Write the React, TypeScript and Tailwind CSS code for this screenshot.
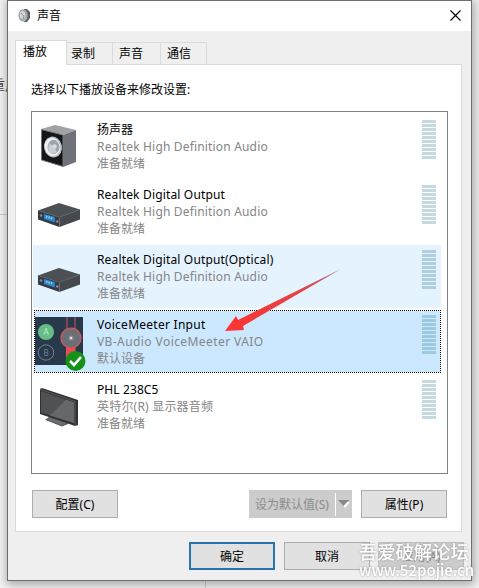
import React from "react";

const Meter = ({ color }: { color: string }) => (
  <div className="mt-[5px] flex w-[14px] flex-col gap-px">
    {Array.from({ length: 10 }, (_, i) => (
      <div key={i} className={`h-[3px] ${color}`} />
    ))}
  </div>
);

const SpeakerIcon = () => (
  <svg width="50" height="60" viewBox="0 0 50 60">
    <path d="M8 14L22 10L43 15L30 20Z" fill="#a1a2a6" />
    <path d="M30 20L43 15V47L30 52Z" fill="#707279" />
    <path d="M8.500 14.500L30 20V51.500L8.500 45Z" fill="#15161a" stroke="#77787c" />
    <ellipse cx="20" cy="32" rx="9" ry="10.500" fill="#b8bbc0" transform="rotate(-12 20 32)" />
    <ellipse cx="19.500" cy="32" rx="7.800" ry="9.200" fill="#f0f1f2" transform="rotate(-12 19.500 32)" />
    <ellipse cx="20.500" cy="32" rx="6" ry="7.200" fill="#9ca3ab" />
    <path d="M16 28L21 32L24 37Q19 41 15 36Z" fill="#c9ced3" />
    <circle cx="21.500" cy="31.500" r="2.300" fill="#d9dce1" />
  </svg>
);

const DigitalIcon = () => (
  <svg width="50" height="60" viewBox="0 0 50 60">
    <path d="M5 30.500L26 23L47 29.500L26.500 37.500Z" fill="#4b5055" />
    <path d="M5 30.500L26.500 37V47L5 39.500Z" fill="#343b44" />
    <path d="M26.500 37L47 29.500V39.500L26.500 47Z" fill="#45494d" />
    <path d="M5 30.500L26.500 37.200L47 29.500" fill="none" stroke="#6b7177" strokeWidth=".6" />
    <path d="M11 34L22 37V42.500L11 39Z" fill="#3185ca" />
    <path d="M13 36.500L20 38.700" stroke="#7dcbf7" strokeWidth="2" strokeDasharray="1.500 1" />
    <circle cx="8" cy="35.500" r="1.200" fill="#7d9099" />
    <circle cx="24.300" cy="41.500" r="1.200" fill="#8a9298" />
  </svg>
);

const MixerIcon = () => (
  <svg width="54" height="62" viewBox="0 0 54 62">
    <rect x="2" y="6" width="48" height="48" fill="#28394c" />
    <path d="M34 6V54M42 6V54" stroke="#d84e55" strokeWidth="1" />
    <path d="M33 33H42V48H33Z" fill="#ed4d4e" />
    <circle cx="13" cy="21" r="8" fill="#66bd87" />
    <circle cx="13" cy="41.500" r="7.700" fill="none" stroke="#73808c" strokeWidth="1" />
    <text x="13" y="24" textAnchor="middle" fontSize="8" fill="#c4e7cf" fontFamily="Noto Sans">A</text>
    <text x="13" y="44.500" textAnchor="middle" fontSize="8" fill="#73808c" fontFamily="Noto Sans">B</text>
    <circle cx="38" cy="27" r="10" fill="#6d6f77" stroke="#d8575d" strokeWidth="1.200" />
    <circle cx="38" cy="27" r="2.500" fill="#8c9096" />
    <circle cx="38" cy="27" r="1" fill="white" />
    <circle cx="42.500" cy="50" r="10" fill="#159018" />
    <path d="M37 50L41 54L48 46" fill="none" stroke="white" strokeWidth="2.600" />
  </svg>
);

const ScreenIcon = () => (
  <svg width="50" height="60" viewBox="0 0 50 60">
    <path d="M17 41L12.500 44.500L29 51L35 48.500L28 44Z" fill="#6b6e71" />
    <path d="M12.500 44.500L29 51L35 48.500" fill="none" stroke="#3b3d40" strokeWidth=".8" />
    <path d="M7 14L9 13L45 25V50L42 51L7 39Z" fill="#303134" />
    <path d="M8 16L41 27.500V48L8 37.500Z" fill="#505152" />
    <path d="M33 24.700L41 27.500V48L17 40.500Z" fill="#666767" />
    <path d="M7 14.300L42 26.500V51" fill="none" stroke="#8a8b8d" strokeWidth=".5" />
  </svg>
);

type Device = {
  name: string;
  detail: string;
  status: string;
  icon: React.ReactNode;
  row: string;
  meter: string;
  nameSpacing: string;
  detailSpacing: string;
};

const devices: Device[] = [
  { name: "扬声器", detail: "Realtek High Definition Audio", status: "准备就绪", icon: <SpeakerIcon />, row: "h-[64px] mb-px", meter: "bg-[#c5dadf]", nameSpacing: "", detailSpacing: "tracking-[0.17px]" },
  { name: "Realtek Digital Output", detail: "Realtek High Definition Audio", status: "准备就绪", icon: <DigitalIcon />, row: "h-[64px] mb-px", meter: "bg-[#c5dadf]", nameSpacing: "tracking-[0.16px]", detailSpacing: "tracking-[0.17px]" },
  { name: "Realtek Digital Output(Optical)", detail: "Realtek High Definition Audio", status: "准备就绪", icon: <DigitalIcon />, row: "h-[63px] mb-[3px] bg-[#e5f3ff]", meter: "bg-[#afcfdf]", nameSpacing: "tracking-[0.16px]", detailSpacing: "tracking-[0.17px]" },
  { name: "VoiceMeeter Input", detail: "VB-Audio VoiceMeeter VAIO", status: "默认设备", icon: <MixerIcon />, row: "h-[61px] mb-[3px] bg-[#cce8ff] outline-1 -outline-offset-0 outline-dotted outline-black", meter: "bg-[#9dc9df]", nameSpacing: "tracking-[0.26px]", detailSpacing: "tracking-[0.42px]" },
  { name: "PHL 238C5", detail: "英特尔(R) 显示器音频", status: "准备就绪", icon: <ScreenIcon />, row: "h-[64px]", meter: "bg-[#c5dadf]", nameSpacing: "tracking-[0.1px]", detailSpacing: "tracking-[0.2px]" },
];

const Button = ({ children, className }: { children: React.ReactNode; className: string }) => (
  <button className={`flex h-[28px] shrink-0 items-center justify-center ${className}`}>{children}</button>
);

export default function App() {
  return (
    <main className="relative h-[588px] w-[479px] overflow-hidden bg-[#f4f4f4] pl-[7px] font-['Noto_Sans','Noto_Sans_CJK_SC',sans-serif] text-[12px] leading-[17px] text-black">
      <span className="absolute top-[76px] -left-[9px] text-[14px] text-[#444]">重启</span>
      <div className="absolute top-[214px] left-0 h-px w-[7px] bg-[#ccc]" />
      <div className="absolute top-[581px] left-[205px] h-[7px] w-px bg-[#ccc]" />
      <section className="relative flex h-[581px] w-[465px] flex-col border border-[#6e6e6e] bg-[#efefef] shadow-[1px_2px_9px_2px_rgba(0,0,0,0.3)]">
        <header className="flex h-[30px] shrink-0 items-center justify-between bg-white pr-[10px] pb-[2px] pl-[9px]">
          <div className="flex items-center gap-[5px]">
            <svg width="15" height="15" viewBox="0 0 15 15">
              <path d="M7 1L10 1L13 4V10L10 14H7Z" fill="#58626a" />
              <ellipse cx="6" cy="7.500" rx="4.600" ry="6.200" fill="#abb4b9" />
              <ellipse cx="5.500" cy="7" rx="3.200" ry="4.500" fill="#d2d8da" stroke="#8c969c" strokeWidth=".7" />
              <path d="M4 5L7 8L6 11" fill="none" stroke="#8c969c" />
            </svg>
            <span>声音</span>
          </div>
          <svg width="11" height="11" viewBox="0 0 11 11"><path d="M.5.5L10.500 10.500M10.500.5L.5 10.500" stroke="black" strokeWidth="1.200" /></svg>
        </header>
        <nav className="z-10 flex h-[33px] shrink-0 items-end pl-[7px]">
          <div className="-mb-px h-[25px] w-[52px] border border-b-0 border-[#dadada] bg-white pt-[2px] pl-[7px]">播放</div>
          <div className="h-[22px] w-[46px] border-t border-r border-[#dadada] pt-[2px] pl-[4px]">录制</div>
          <div className="h-[22px] w-[48px] border-t border-r border-[#dadada] pt-[2px] pl-[6px]">声音</div>
          <div className="h-[22px] w-[46px] border-t border-r border-[#dadada] pt-[2px] pl-[6px]">通信</div>
        </nav>
        <div className="ml-[7px] h-[468px] w-[447px] shrink-0 border border-[#dadada] bg-white px-[15px]">
          <p className="pt-[16px]">选择以下播放设备来修改设置:</p>
          <div className="mt-[13px] h-[363px] w-[417px] border border-[#7e8287] px-px pt-[3px]">
            {devices.map((d, i) => (
              <div key={d.name} className={`flex ${i === 3 ? "ml-[2px] w-[405px]" : "w-[408px]"} ${d.row}`}>
                <div className={`shrink-0 ${i === 3 ? "-ml-[2px] w-[64px]" : "w-[64px]"}`}>{d.icon}</div>
                <div className={`flex-1 whitespace-nowrap text-[#858585] ${i === 3 ? "pt-[5px]" : "pt-[6px]"}`}>
                  <div className={`text-black ${d.nameSpacing}`}>{d.name}</div>
                  <div className={d.detailSpacing}>{d.detail}</div>
                  <div>{d.status}</div>
                </div>
                <div className={i === 3 ? "-mt-px w-[18px]" : "w-[19px]"}><Meter color={d.meter} /></div>
              </div>
            ))}
          </div>
          <div className="mt-[16px] flex">
            <Button className="ml-px w-[86px] border border-[#adadad] bg-[#e1e1e1]">配置(C)</Button>
            <div className="ml-[131px] flex h-[28px] w-[103px] shrink-0 items-center bg-[#ccc] text-[#8b8b8b]">
              <span className="w-[86px] text-center">设为默认值(S)</span>
              <i className="h-[23px] w-px bg-white" />
              <svg className="ml-[2px]" width="12" height="8" viewBox="0 0 12 8"><path d="M2 2H12L7 8Z" fill="white" /><path d="M0 0H11L5.500 6Z" fill="#888" /></svg>
            </div>
            <Button className="ml-[9px] w-[86px] border border-[#adadad] bg-[#e1e1e1]">属性(P)</Button>
          </div>
        </div>
        <footer className="flex pt-[10px] pl-[181px]">
          <Button className="w-[86px] border-2 border-[#2875b0] bg-[#e1e1e1]">确定</Button>
          <Button className="ml-[9px] w-[86px] border border-[#adadad] bg-[#e1e1e1]">取消</Button>
          <Button className="ml-[8px] w-[86px] border border-[#bfbfbf] bg-[#ccc] text-[#858585]">应用(A)</Button>
        </footer>
      </section>
      <svg className="absolute top-[265px] left-[220px]" width="125" height="70" viewBox="0 0 125 70">
        <defs><linearGradient id="arrow" x1="1" x2="0"><stop stopColor="#a66b80" /><stop offset=".3" stopColor="#e14448" /><stop offset="1" stopColor="#ff3333" /></linearGradient></defs>
        <path d="M5 66L16 51L18 55L121 4L23 61L24 65Z" fill="url(#arrow)" />
      </svg>
      <div className="absolute top-[539px] left-[359px] font-['Noto_Sans_CJK_SC',sans-serif] font-medium whitespace-nowrap text-white drop-shadow-[0_0_1px_#999]">
        <div className="text-[18.3px] leading-[24px]">吾爱破解论坛</div>
        <div className="text-[15px] leading-[14px]">www.52pojie.cn</div>
      </div>
    </main>
  );
}
